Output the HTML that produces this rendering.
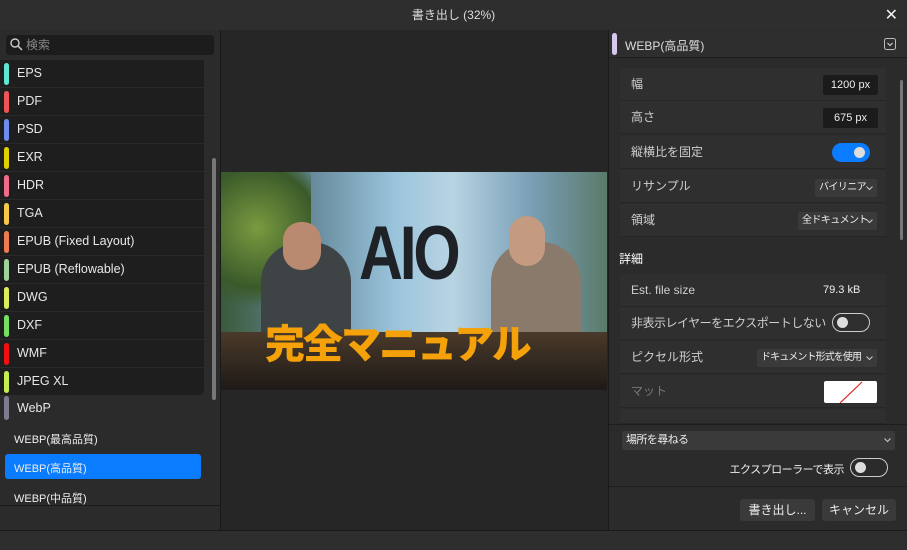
<!DOCTYPE html>
<html><head><meta charset="utf-8"><style>
*{box-sizing:border-box;margin:0;padding:0;white-space:nowrap}
body{width:907px;height:550px;background:#2b2b2b;font-family:"Liberation Sans","Noto Sans CJK JP",sans-serif;color:#e6e6e6;position:relative;overflow:hidden;font-size:12px}
.abs{position:absolute}
.title{left:0;top:0;width:907px;height:30px;background:#2e2e2e;text-align:center;line-height:30px;font-size:12px;color:#ddd}
.left{left:0;top:30px;width:221px;height:500px;background:#2b2b2b;border-right:1px solid #1a1a1a}
.search{left:6px;top:35px;width:208px;height:20px;background:#1c1c1c;border-radius:3px;color:#888;font-size:12px;line-height:20px;padding-left:20px}
.list{left:0;top:60px;width:204px;height:335px;background:#1e1e1e;border-radius:0 0 5px 0}
.item{position:absolute;left:0;width:204px;height:28px;line-height:26px;padding-left:17px;font-size:12.5px;color:#e8e8e8;border-bottom:1px solid #2a2a2a}
.item i{position:absolute;left:4px;top:3px;width:5px;height:22px;border-radius:3px}
.sub{position:absolute;left:14px;font-size:11px;color:#eee}
.mid{left:221px;top:30px;width:387px;height:500px;background:#262626}
.right{left:608px;top:30px;width:299px;height:500px;background:#2b2b2b;border-left:1px solid #1a1a1a}
.row{position:absolute;left:620px;width:266px;height:33px;background:#2f2f2f;border-bottom:1px solid #262626;font-size:12px;color:#cfcfcf;line-height:33px;padding-left:11px}
.val{position:absolute;background:#1b1b1b;color:#eee;font-size:11px;text-align:center;border-radius:2px}
.dd{position:absolute;background:#3a3a3a;color:#eee;font-size:10px;letter-spacing:-0.6px;border-radius:2px;padding-left:4px;overflow:hidden}
.dd svg{position:absolute;right:4px;top:7px}
.tog{position:absolute;width:38px;height:19px;border-radius:10px}
.btn{position:absolute;height:22px;background:#3a3a3a;border-radius:3px;text-align:center;line-height:22px;font-size:12px;color:#eee}
</style></head><body>
<div class="abs title">書き出し (32%)</div>
<div class="abs" style="right:9px;top:5px;font-size:16px;color:#eee">✕</div>
<div class="abs left"></div>
<div class="abs search">検索</div>
<svg class="abs" style="left:10px;top:38px" width="13" height="13"><circle cx="5" cy="5" r="4" stroke="#ccc" stroke-width="1.4" fill="none"/><line x1="8" y1="8" x2="12" y2="12" stroke="#ccc" stroke-width="1.5"/></svg>
<div class="abs list">
<div class="item" style="top:0"><i style="background:#5ee6d2"></i>EPS</div>
<div class="item" style="top:28px"><i style="background:#f05454"></i>PDF</div>
<div class="item" style="top:56px"><i style="background:#6e8cf0"></i>PSD</div>
<div class="item" style="top:84px"><i style="background:#e0d000"></i>EXR</div>
<div class="item" style="top:112px"><i style="background:#f06a8a"></i>HDR</div>
<div class="item" style="top:140px"><i style="background:#f8c848"></i>TGA</div>
<div class="item" style="top:168px"><i style="background:#ee7c50"></i>EPUB (Fixed Layout)</div>
<div class="item" style="top:196px"><i style="background:#9ed39a"></i>EPUB (Reflowable)</div>
<div class="item" style="top:224px"><i style="background:#dcee5a"></i>DWG</div>
<div class="item" style="top:252px"><i style="background:#76e060"></i>DXF</div>
<div class="item" style="top:280px"><i style="background:#f01010"></i>WMF</div>
<div class="item" style="top:308px;border:none"><i style="background:#c6ee50"></i>JPEG XL</div>
</div>
<div class="abs" style="left:212px;top:158px;width:4px;height:242px;background:#777;border-radius:2px"></div>
<div class="abs" style="left:4px;top:396px;width:5px;height:24px;border-radius:3px;background:#807a90"></div>
<div class="abs" style="left:17px;top:401px;font-size:12.5px">WebP</div>
<div class="sub" style="top:431px">WEBP(最高品質)</div>
<div class="abs" style="left:5px;top:454px;width:196px;height:25px;background:#0a7cff;border-radius:3px"></div>
<div class="sub" style="top:460px">WEBP(高品質)</div>
<div class="sub" style="top:490px">WEBP(中品質)</div>
<div class="abs" style="left:0;top:505px;width:221px;height:1px;background:#1a1a1a"></div>
<div class="abs mid"></div>
<div class="abs" style="left:221px;top:172px;width:386px;height:218px;overflow:hidden;background:linear-gradient(90deg,#3a5a3a 0%,#6a8ea0 25%,#9ac4dc 45%,#b8d4e2 60%,#7aa0b8 80%,#5a7a6a 100%)">
<div class="abs" style="left:0;top:0;width:90px;height:140px;background:radial-gradient(circle at 40% 40%,#7a9a40,#3a5a2a 60%,transparent 80%)"></div>
<div class="abs" style="left:40px;top:70px;width:90px;height:120px;border-radius:40px 40px 0 0;background:#3e4446"></div>
<div class="abs" style="left:62px;top:50px;width:38px;height:48px;border-radius:18px;background:#b98a70"></div>
<div class="abs" style="left:270px;top:70px;width:90px;height:120px;border-radius:40px 40px 0 0;background:#8a7a6c"></div>
<div class="abs" style="left:288px;top:44px;width:36px;height:50px;border-radius:18px;background:#c49a80"></div>
<div class="abs" style="left:0;top:160px;width:386px;height:58px;background:linear-gradient(#4a3a2a,#1e1a18)"></div>
<div class="abs" style="left:138px;top:38px;font-size:76px;font-weight:bold;color:#1e2226;letter-spacing:-4px;transform:scaleX(0.8);transform-origin:left">AIO</div>
<div class="abs" style="left:44px;top:140px;font-size:40px;font-weight:900;color:#f5a20a;letter-spacing:-2px">完全マニュアル</div>
</div>
<div class="abs right"></div>
<div class="abs" style="left:609px;top:31px;width:298px;height:27px;background:#2e2e2e;border-bottom:1px solid #1e1e1e"></div>
<div class="abs" style="left:612px;top:33px;width:5px;height:22px;border-radius:3px;background:#d8c8f0"></div>
<div class="abs" style="left:625px;top:37px;font-size:12px;color:#ddd">WEBP(高品質)</div>
<svg class="abs" style="left:884px;top:38px" width="13" height="13"><rect x="0.5" y="0.5" width="11" height="11" rx="2" fill="none" stroke="#bbb"/><path d="M3.5 5 L6 7.5 L8.5 5" stroke="#ddd" fill="none"/></svg>
<div class="abs" style="left:900px;top:80px;width:3px;height:160px;background:#777;border-radius:2px"></div>
<div class="row" style="top:68px">幅</div>
<div class="val" style="left:823px;top:75px;width:55px;height:20px;line-height:20px">1200 px</div>
<div class="row" style="top:101px">高さ</div>
<div class="val" style="left:823px;top:108px;width:55px;height:20px;line-height:20px">675 px</div>
<div class="row" style="top:136px">縦横比を固定</div>
<div class="tog" style="left:832px;top:143px;background:#0a7cff"><div class="abs" style="right:5px;top:4px;width:11px;height:11px;border-radius:6px;background:#ddd"></div></div>
<div class="row" style="top:170px">リサンプル</div>
<div class="dd" style="left:815px;top:179px;width:62px;height:18px;line-height:18px">バイリニア<svg width="7" height="5"><path d="M0.5 0.5 L3.5 3.5 L6.5 0.5" stroke="#ccc" fill="none"/></svg></div>
<div class="row" style="top:204px">領域</div>
<div class="dd" style="left:798px;top:212px;width:79px;height:18px;line-height:18px">全ドキュメント<svg width="7" height="5"><path d="M0.5 0.5 L3.5 3.5 L6.5 0.5" stroke="#ccc" fill="none"/></svg></div>
<div class="abs" style="left:619px;top:250px;font-size:12px;color:#fff">詳細</div>
<div class="row" style="top:274px">Est. file size</div>
<div class="abs" style="left:823px;top:284px;font-size:11px;color:#eee">79.3 kB</div>
<div class="row" style="top:307px;letter-spacing:-0.5px">非表示レイヤーをエクスポートしない</div>
<div class="tog" style="left:832px;top:313px;border:1.5px solid #ccc"><div class="abs" style="left:4px;top:3px;width:11px;height:11px;border-radius:6px;background:#ddd"></div></div>
<div class="row" style="top:341px">ピクセル形式</div>
<div class="dd" style="left:757px;top:349px;width:120px;height:18px;line-height:18px;letter-spacing:-0.9px">ドキュメント形式を使用<svg width="7" height="5"><path d="M0.5 0.5 L3.5 3.5 L6.5 0.5" stroke="#ccc" fill="none"/></svg></div>
<div class="row" style="top:375px;color:#777">マット</div>
<div class="abs" style="left:824px;top:381px;width:53px;height:22px;background:#fff;border-radius:2px"><svg width="53" height="22"><line x1="38" y1="1" x2="16" y2="22" stroke="#e02020" stroke-width="1.2"/></svg></div>
<div class="row" style="top:409px;height:15px"></div>
<div class="abs" style="left:609px;top:424px;width:298px;height:1px;background:#1e1e1e"></div>
<div class="dd" style="left:622px;top:431px;width:273px;height:19px;line-height:19px;font-size:11px">場所を尋ねる<svg width="7" height="5"><path d="M0.5 0.5 L3.5 3.5 L6.5 0.5" stroke="#ccc" fill="none"/></svg></div>
<div class="abs" style="right:63px;top:461px;font-size:11px;letter-spacing:-0.5px;color:#eee">エクスプローラーで表示</div>
<div class="tog" style="left:850px;top:458px;border:1.5px solid #ccc"><div class="abs" style="left:4px;top:3px;width:11px;height:11px;border-radius:6px;background:#ddd"></div></div>
<div class="abs" style="left:609px;top:486px;width:298px;height:1px;background:#1e1e1e"></div>
<div class="btn" style="left:740px;top:499px;width:75px">書き出し...</div>
<div class="btn" style="left:822px;top:499px;width:74px">キャンセル</div>
<div class="abs" style="left:0;top:530px;width:907px;height:20px;background:#2e2e2e;border-top:1px solid #1a1a1a"></div>
</body></html>
